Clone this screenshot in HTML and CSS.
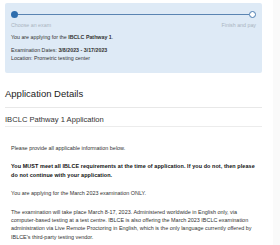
FILE: index.html
```html
<!DOCTYPE html>
<html lang="en">
<head>
  <meta charset="UTF-8">
  <meta name="viewport" content="width=device-width, initial-scale=1.0">
  <title>IBCLC Application</title>
  <link rel="stylesheet" href="styles.css">
</head>
<body>
  <div class="page">
    <div class="main">
      <div class="summary">
        <div class="progress">
          <span class="dot done"></span>
          <span class="track"></span>
          <span class="dot open"></span>
        </div>
        <div class="steps">
          <span>Choose an exam</span>
          <span>Finish and pay</span>
        </div>
        <p class="applying">You are applying for the <strong>IBCLC Pathway 1</strong>.</p>
        <p class="info">Examination Dates: <strong>3/8/2023 - 3/17/2023</strong><br>Location: Prometric testing center</p>
      </div>

      <h1 class="title">Application Details</h1>
      <h2 class="section">IBCLC Pathway 1 Application</h2>

      <div class="body">
        <p>Please provide all applicable information below.</p>
        <p class="strong">You MUST meet all IBLCE requirements at the time of application. If you do not, then please do not continue with your application.</p>
        <p>You are applying for the March 2023 examination ONLY.</p>
        <p>The examination will take place March 8-17, 2023. Administered worldwide in English only, via computer-based testing at a test centre. IBLCE is also offering the March 2023 IBCLC examination administration via Live Remote Proctoring in English, which is the only language currently offered by IBLCE's third-party testing vendor.</p>
      </div>
    </div>
    <div class="side"></div>
  </div>
</body>
</html>
```

FILE: styles.css
```css
body {
  font-family: "Liberation Sans", Arial, sans-serif;
  margin: 0;
  padding: 0;
  background: white;
  color: #333;
}
.page {
  display: flex;
  min-height: 245px;
}
.main {
  width: 257px;
  margin-left: 5px;
}
.side {
  width: 7px;
  margin-left: 11px;
  background-color: #fafafa;
}
.summary {
  margin-top: 3px;
  padding: 8px 6px 11px 6px;
  background-color: #deeaf6;
  border-radius: 2px;
  font-size: 5.3px;
}
.progress {
  display: flex;
  align-items: center;
  height: 7px;
}
.track {
  flex: 1;
  height: 1.5px;
  background-color: #5a84b2;
}
.dot {
  width: 7px;
  height: 7px;
  border-radius: 50%;
  box-sizing: border-box;
}
.dot.done {
  background-color: #2e6dad;
}
.dot.open {
  background-color: white;
  border: 1.5px solid #4a7cb0;
}
.steps {
  display: flex;
  justify-content: space-between;
  margin-top: 2.5px;
  line-height: 8px;
  color: #a9b4c0;
}
.summary p {
  margin: 0;
  color: #333;
}
.applying {
  margin-top: 4.5px !important;
  line-height: 8px;
}
.info {
  margin-top: 6px !important;
  line-height: 7.5px;
}
.title {
  margin: 15px 0 0 0;
  padding-bottom: 7px;
  font-size: 9.5px;
  line-height: 12px;
  font-weight: normal;
  color: #222;
  border-bottom: 1px solid #e8e8e8;
}
.section {
  margin: 0;
  padding: 7px 0 1px 0;
  font-size: 7.6px;
  line-height: 10px;
  font-weight: normal;
  color: #333;
  border-bottom: 1.5px solid #ececec;
}
.body {
  padding: 17px 6px 0 6px;
  font-size: 5.45px;
  line-height: 8.4px;
  color: #333;
}
.body p {
  margin: 0 0 10px 0;
}
.body .strong {
  font-weight: bold;
  letter-spacing: 0.08px;
  color: #111;
}
```
